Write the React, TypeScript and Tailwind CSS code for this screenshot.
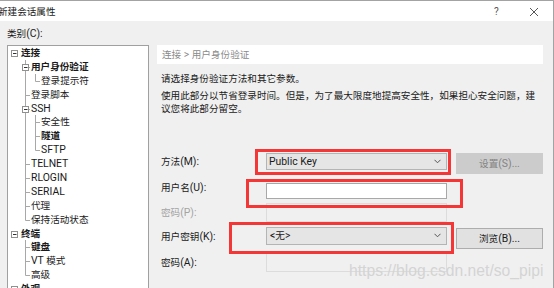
import React from "react";

function T({ s }: { s: string }) {
  const parts = s.split(/([\u2E80-\uFFFF]+)/).filter((p) => p.length > 0);
  return (
    <span>
      {parts.map((p, i) =>
        /[\u2E80-\uFFFF]/.test(p) ? (
          <span key={i}>{p}</span>
        ) : (
          <span key={i} className="text-[10.4px] whitespace-pre">
            {p}
          </span>
        )
      )}
    </span>
  );
}

type Row = {
  t: string;
  lvl: 0 | 1 | 2;
  bold?: boolean;
  box?: boolean;
  l1?: "T" | "L" | "|";
  l2?: "T" | "L";
};

const rows: Row[] = [
  { t: "连接", lvl: 0, bold: true, box: true },
  { t: "用户身份验证", lvl: 1, bold: true, box: true, l1: "T" },
  { t: "登录提示符", lvl: 2, l1: "|", l2: "L" },
  { t: "登录脚本", lvl: 1, l1: "T" },
  { t: "SSH", lvl: 1, box: true, l1: "T" },
  { t: "安全性", lvl: 2, l1: "|", l2: "T" },
  { t: "隧道", lvl: 2, bold: true, l1: "|", l2: "T" },
  { t: "SFTP", lvl: 2, l1: "|", l2: "L" },
  { t: "TELNET", lvl: 1, l1: "T" },
  { t: "RLOGIN", lvl: 1, l1: "T" },
  { t: "SERIAL", lvl: 1, l1: "T" },
  { t: "代理", lvl: 1, l1: "T" },
  { t: "保持活动状态", lvl: 1, l1: "L" },
  { t: "终端", lvl: 0, bold: true, box: true },
  { t: "键盘", lvl: 1, bold: true, l1: "T" },
  { t: "VT 模式", lvl: 1, l1: "T" },
  { t: "高级", lvl: 1, l1: "L" },
  { t: "外观", lvl: 0, bold: true, box: true },
];

const LINE = "#a8a8a8";

function Gutter({ r }: { r: Row }) {
  const w = r.lvl === 0 ? 13 : r.lvl === 1 ? 23 : 33;
  const cx = r.lvl === 0 ? 6.5 : 17.5;
  return (
    <svg width={w} height={14} className="shrink-0 overflow-visible">
      {r.l1 && (
        <line x1={17.5} x2={17.5} y1={0} y2={r.l1 === "L" ? 7.5 : 14} stroke={LINE} />
      )}
      {r.lvl === 1 && <line x1={17.5} x2={22} y1={7.5} y2={7.5} stroke={LINE} />}
      {r.l2 && (
        <>
          <line x1={27.5} x2={27.5} y1={0} y2={r.l2 === "L" ? 7.5 : 14} stroke={LINE} />
          <line x1={27.5} x2={32} y1={7.5} y2={7.5} stroke={LINE} />
        </>
      )}
      {r.box && (
        <g>
          <rect x={cx - 3} y={4.5} width={6} height={6} fill="#fff" stroke="#909090" />
          <line x1={cx - 1.5} x2={cx + 2} y1={7.5} y2={7.5} stroke="#333" />
        </g>
      )}
    </svg>
  );
}

function Chevron() {
  return (
    <svg width={7} height={5} className="shrink-0">
      <polyline points="0.5,0.8 3.5,3.8 6.5,0.8" fill="none" stroke="#555" strokeWidth={1} />
    </svg>
  );
}

export default function App() {
  return (
    <div className="relative w-[554px] h-[288px] overflow-hidden bg-[#f0f0f0] border-t border-r border-[#a3a3a3] font-['Roboto','Noto_Sans_CJK_SC',sans-serif] text-[9.6px] text-[#1a1a1a]">
      {/* title bar */}
      <div className="h-[20px] bg-white flex items-start pt-[4px] leading-[14px]">
        <div className="ml-[-2px] flex-1 whitespace-nowrap">
          <T s="新建会话属性" />
        </div>
        <div className="w-[10px] text-[#555] text-[10px] mr-[25px]">?</div>
        <svg width={10} height={10} className="mt-[2px] mr-[14px]">
          <line x1={1} y1={1} x2={9} y2={9} stroke="#444" strokeWidth={0.9} />
          <line x1={9} y1={1} x2={1} y2={9} stroke="#444" strokeWidth={0.9} />
        </svg>
      </div>

      <div className="flex">
        {/* left column */}
        <div className="w-[149px] pl-[7px] flex flex-col">
          <div className="mt-[6px] leading-[14px]">
            <T s="类别(C):" />
          </div>
          <div className="mt-[4px] h-[260px] bg-white border border-[#a0a0a0] overflow-hidden">
            {rows.map((r, i) => (
              <div
                key={i}
                className={`flex items-center h-[13.9px] leading-[13.9px] whitespace-nowrap ${
                  r.bold ? "font-bold" : ""
                }`}
              >
                <Gutter r={r} />
                <T s={r.t} />
              </div>
            ))}
          </div>
        </div>

        {/* right column */}
        <div className="ml-[8px] w-[386px] flex flex-col">
          <div className="mt-[24px] h-[19px] bg-white flex items-center pl-[5px] text-[#8a8a8a] whitespace-nowrap">
            <T s="连接 > 用户身份验证" />
          </div>
          <div className="mt-[8px] pl-[4px] leading-[14px] whitespace-nowrap">
            <T s="请选择身份验证方法和其它参数。" />
          </div>
          <div className="mt-[3px] pl-[4px] leading-[13.4px] whitespace-nowrap">
            <div>
              <T s="使用此部分以节省登录时间。但是，为了最大限度地提高安全性，如果担心安全问题，建" />
            </div>
            <div>
              <T s="议您将此部分留空。" />
            </div>
          </div>

          {/* form */}
          <div className="mt-[37px] pl-[4px] flex flex-col whitespace-nowrap">
            <div className="flex items-start">
              <div className="w-[105px] leading-[17px]">
                <T s="方法(M):" />
              </div>
              <div className="w-[181px] h-[17px] bg-[#e5e5e5] border border-[#b4b4b4] flex items-center justify-between pl-[2px] pr-[5px]">
                <T s="Public Key" />
                <Chevron />
              </div>
              <div className="ml-[9px] w-[87px] h-[21px] bg-[#cccccc] text-[#838383] flex items-center justify-center">
                <T s="设置(S)..." />
              </div>
            </div>

            <div className="mt-[9px] flex items-start">
              <div className="w-[105px] leading-[16px] -mt-[3px]">
                <T s="用户名(U):" />
              </div>
              <div className="w-[181px] h-[16px] bg-white border border-[#a8a8a8]" />
            </div>

            <div className="mt-[4px] flex items-start">
              <div className="w-[105px] leading-[19px] text-[#a3a3a3]">
                <T s="密码(P):" />
              </div>
              <div className="w-[181px] h-[19px] border border-[#dcdcdc]" />
            </div>

            <div className="mt-[5px] flex items-start">
              <div className="w-[105px] leading-[20px]">
                <T s="用户密钥(K):" />
              </div>
              <div className="w-[181px] h-[18px] bg-[#e5e5e5] border border-[#b4b4b4] flex items-center justify-between pl-[3px] pr-[5px]">
                <T s="<无>" />
                <Chevron />
              </div>
              <div className="ml-[9px] mt-[1px] w-[87px] h-[21px] bg-[#e1e1e1] border border-[#adadad] flex items-center justify-center">
                <T s="浏览(B)..." />
              </div>
            </div>

            <div className="mt-[4px] flex items-start">
              <div className="w-[105px] leading-[19px]">
                <T s="密码(A):" />
              </div>
              <div className="w-[181px] h-[19px] border border-[#dcdcdc]" />
            </div>
          </div>
        </div>
      </div>

      {/* annotation red boxes */}
      <div className="absolute left-[255px] top-[148px] w-[196px] h-[26px] border-[3px] border-[#f53636]" />
      <div className="absolute left-[246px] top-[178px] w-[217px] h-[29px] border-[3px] border-[#f53636]" />
      <div className="absolute left-[229px] top-[221px] w-[225px] h-[32px] border-[3px] border-[#f53636]" />

      {/* watermark */}
      <div className="absolute left-[349px] top-[261px] leading-[18px] text-[15.7px] font-['Liberation_Sans',Arial,sans-serif] text-[#d4d4d4] whitespace-nowrap">
        https://blog.csdn.net/so_pipi
      </div>
    </div>
  );
}
